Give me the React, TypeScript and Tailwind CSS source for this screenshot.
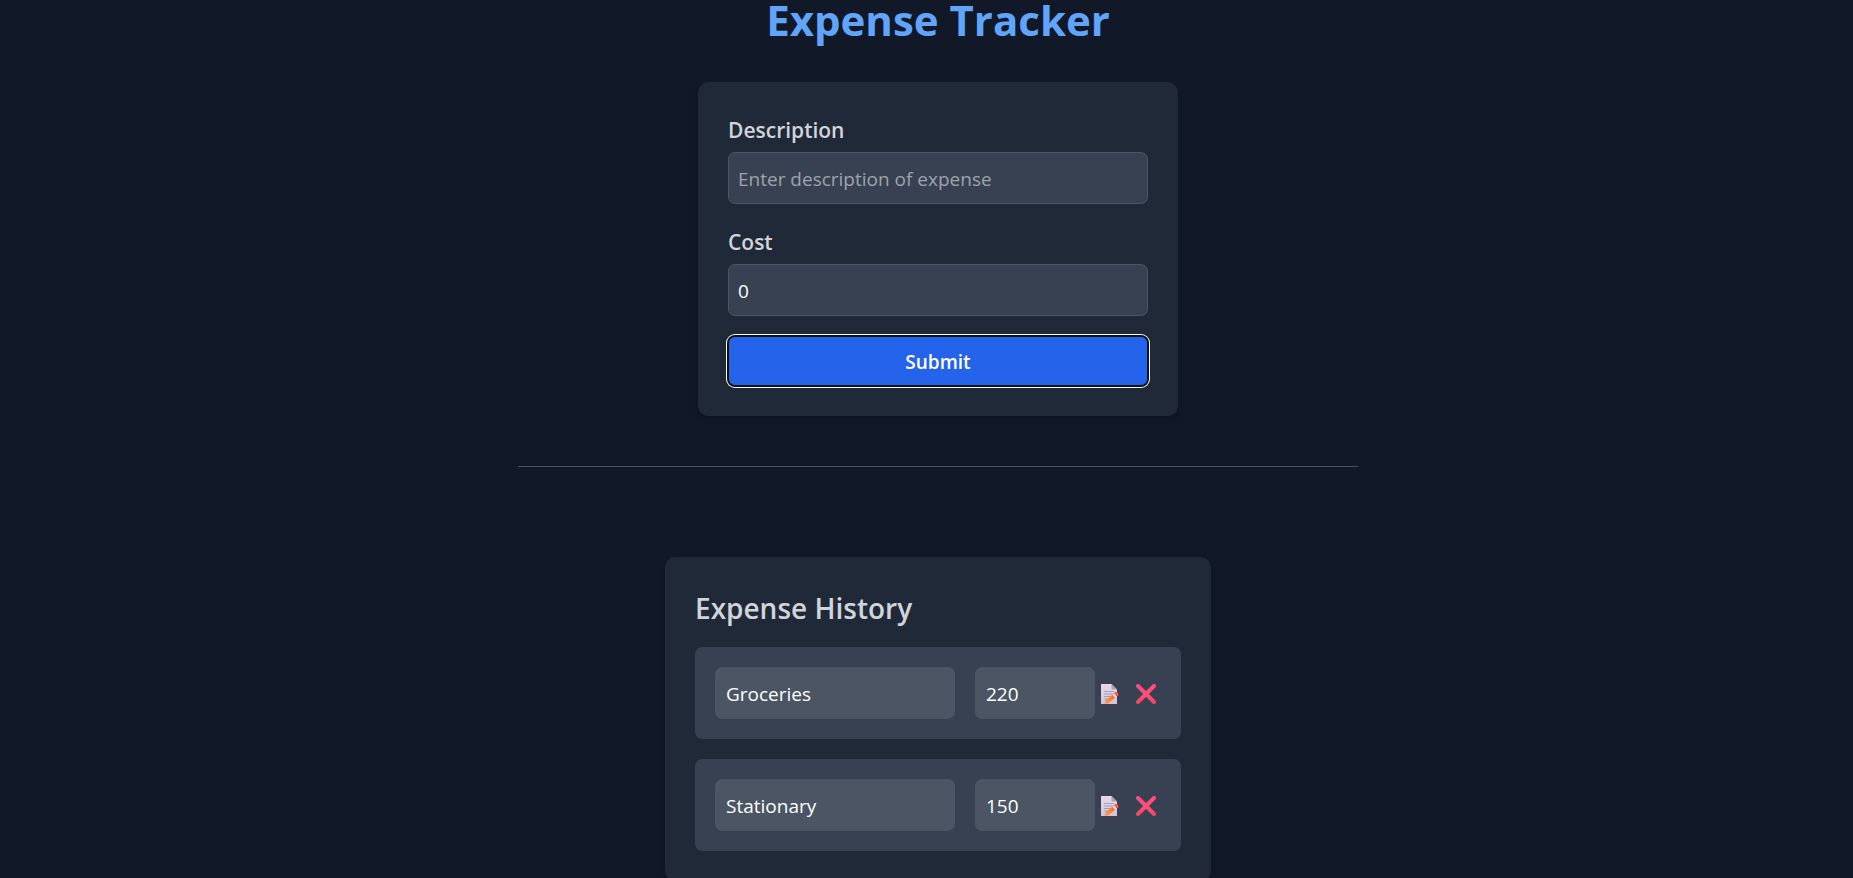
import { useState } from "react";

type Expense = { id: number; description: string; cost: number };

const initialExpenses: Expense[] = [
  { id: 1, description: "Groceries", cost: 220 },
  { id: 2, description: "Stationary", cost: 150 },
];

function EditIcon() {
  return (
    <svg viewBox="0 0 18 20" className="h-5 w-[18px]" aria-hidden="true">
      <defs>
        <linearGradient id="paper" x1="0" y1="0" x2="0" y2="1">
          <stop offset="0" stopColor="#e4dcea" />
          <stop offset="1" stopColor="#cfc4d8" />
        </linearGradient>
        <linearGradient id="pencil" x1="0" y1="1" x2="1" y2="0">
          <stop offset="0" stopColor="#ffa03c" />
          <stop offset="1" stopColor="#f4692f" />
        </linearGradient>
      </defs>
      <path d="M0 0.5Q0 0 .5 0H10.5L16 5.5V19.5Q16 20 15.5 20H.5Q0 20 0 19.5Z" fill="url(#paper)" />
      <path d="M10.5 0 16 5.5H11.5Q10.5 5.500 10.5 4.5Z" fill="#aba1b6" />
      <path d="M3 7.5H13M3 10H13M3 12.5H9M3 15H7" stroke="#a398ae" strokeWidth="0.9" />
      <path d="M3.2 19.7 5 15.2 7.8 18.5Z" fill="#d9a48f" />
      <path d="M4.7 16.3 11.6 10.6 14.4 13.5 7.2 19.5 4.3 19.5Z" fill="url(#pencil)" />
      <path d="M11.3 10.8 13.2 9.2 16 12.2 14.2 13.7Z" fill="#eadfee" />
      <path d="M12.9 9.3 14.3 8.1Q15.2 7.5 16 8.3L17.5 9.8Q18.1 10.6 17.3 11.3L15.9 12.4Z" fill="#fb5a48" />
    </svg>
  );
}

function DeleteIcon() {
  return (
    <svg viewBox="0 0 20 20" className="size-5" fill="none" strokeLinecap="round" aria-hidden="true">
      <defs>
        <linearGradient id="cross" gradientUnits="userSpaceOnUse" x1="0" y1="0" x2="0" y2="20">
          <stop offset="0" stopColor="#ff4a80" />
          <stop offset="0.6" stopColor="#fb4f78" />
          <stop offset="1" stopColor="#ee4355" />
        </linearGradient>
      </defs>
      <path d="M2 2 18 18M18 2 2 18" stroke="url(#cross)" strokeWidth="4" />
    </svg>
  );
}

const fieldClass =
  "h-[52px] w-full rounded-[7px] border border-[#4b5563] bg-[#374151] px-[9px] pt-0.5 text-[19px] text-white outline-none placeholder:text-[#9ca3af]";
const itemClass =
  "h-[52px] min-w-0 rounded-[7px] border border-[#4b5563] bg-[#4b5563] px-2.5 pt-0.5 text-[19px] text-white outline-none";
const labelClass = "mb-[3px] block text-[21px] leading-[37px] font-semibold text-[#d1d5db]";

export default function App() {
  const [expenses, setExpenses] = useState(initialExpenses);

  return (
    <main className="flex min-h-screen flex-col items-center bg-[#111827] pl-[23px] font-['Open_Sans','Noto_Sans',sans-serif] text-white">
      <h1 className="mb-[42px] text-[42px] leading-10 font-bold text-[#60a5fa]">Expense Tracker</h1>

      <form
        className="w-full max-w-[480px] rounded-[10px] bg-[#1f2937] p-[30px] shadow-md"
        onSubmit={(e) => e.preventDefault()}
      >
        <div className="mb-5">
          <label htmlFor="description" className={labelClass}>Description</label>
          <input id="description" type="text" placeholder="Enter description of expense" className={fieldClass} />
        </div>
        <div className="mb-5">
          <label htmlFor="cost" className={labelClass}>Cost</label>
          <input id="cost" type="text" inputMode="numeric" defaultValue="0" className={fieldClass} />
        </div>
        <button
          type="submit"
          className="block h-[50px] w-full rounded-[7px] border border-[#101010] bg-[#2563eb] pt-0.5 text-[19px] font-semibold text-white shadow-[0_0_0_1px_#101010,0_0_0_2px_#ffffff]"
        >
          Submit
        </button>
      </form>

      <hr className="mt-[50px] mb-[90px] w-full max-w-[840px] border-t border-[#4b5563]" />

      <section className="w-full max-w-[546px] rounded-[10px] bg-[#1f2937] p-[30px] shadow-md">
        <h2 className="mb-[18px] text-[28px] leading-[42px] font-semibold text-[#d1d5db]">Expense History</h2>
        <ul className="flex flex-col gap-5">
          {expenses.map((item) => (
            <li key={item.id} className="flex items-center rounded-[7px] bg-[#374151] p-5">
              <input
                type="text"
                aria-label="Expense description"
                defaultValue={item.description}
                className={itemClass + " mr-5 w-60"}
              />
              <input
                type="text"
                inputMode="numeric"
                aria-label="Expense cost"
                defaultValue={item.cost}
                className={itemClass + " w-[120px]"}
              />
              <button type="button" aria-label="Edit expense" className="ml-1.5 pt-0.5">
                <EditIcon />
              </button>
              <button
                type="button"
                aria-label="Delete expense"
                className="ml-[17px] pt-0.5"
                onClick={() => setExpenses(expenses.filter((e) => e.id !== item.id))}
              >
                <DeleteIcon />
              </button>
            </li>
          ))}
        </ul>
      </section>
    </main>
  );
}
